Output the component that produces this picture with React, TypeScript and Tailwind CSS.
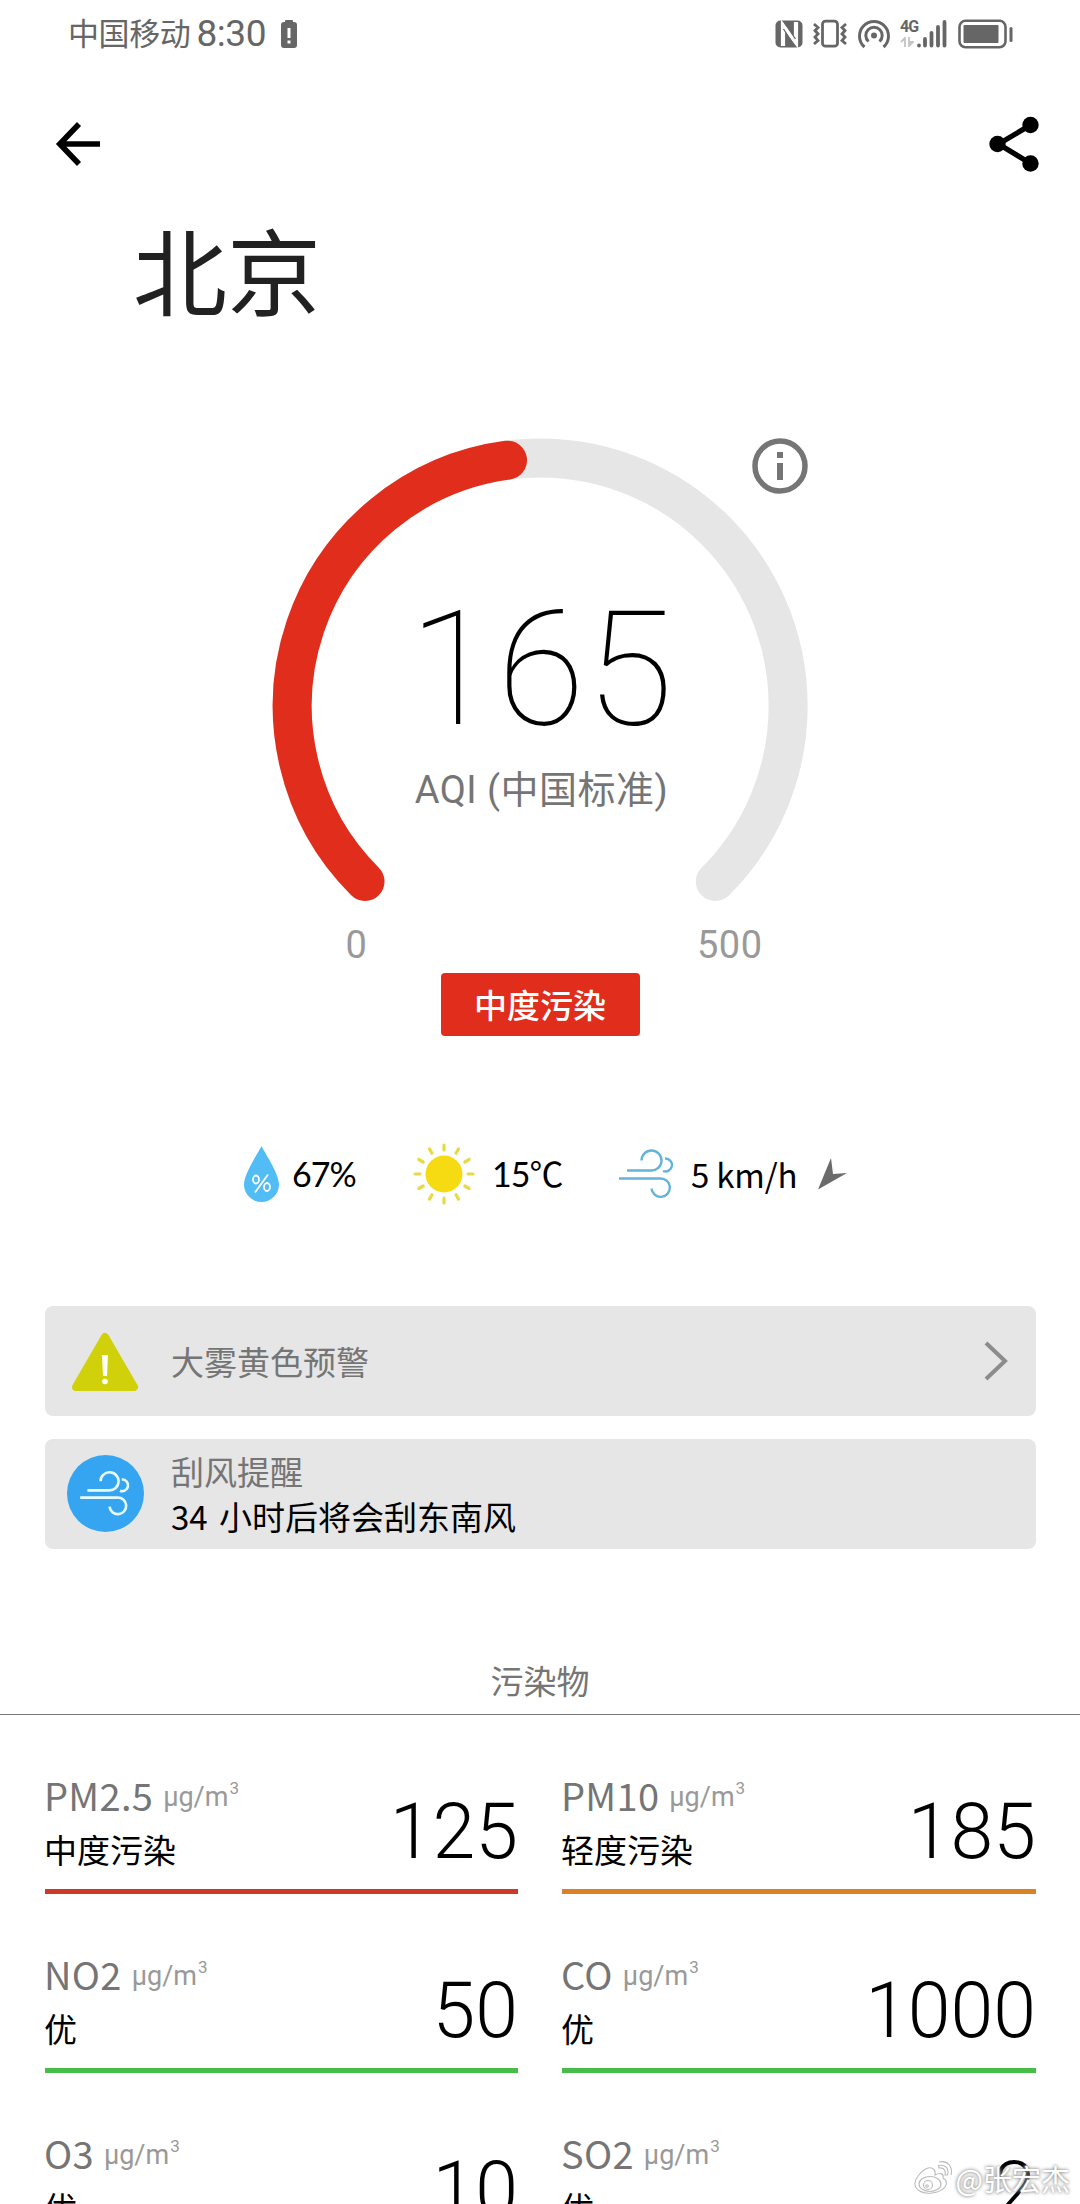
import React from 'react';

const sans = "font-['Roboto','Noto_Sans_CJK_SC',sans-serif]";
const cjk = "font-['Noto_Sans_CJK_SC',sans-serif]";

function StatusBar() {
  return (
    <header className="flex h-[67px] items-center justify-between pl-[68px] pr-[66px] text-[#666]">
      <div className="flex items-center">
        <span className={`${cjk} mb-[3px] text-[31px] leading-[40px] tracking-[-0.4px]`}>中国移动</span>
        <span className="ml-[6px] font-['Roboto',sans-serif] text-[37px] leading-[40px] tracking-[-0.4px]">8:30</span>
        <svg className="ml-[14px]" width="18" height="30" viewBox="0 0 18 30" fill="#666">
          <rect x="5" y="1" width="8" height="4" rx="1" />
          <rect x="1" y="3" width="16" height="26" rx="3" />
          <rect x="7.5" y="9" width="3" height="10" fill="#fff" />
          <rect x="7.5" y="21.500" width="3" height="3" fill="#fff" />
        </svg>
      </div>
      <div className="flex items-center">
        <svg width="28" height="28" viewBox="0 0 28 28">
          <rect x="0.500" y="0.500" width="27" height="27" rx="5" fill="#666" />
          <path d="M8 26V5.500L21 22.500V2" fill="none" stroke="#fff" strokeWidth="4.200" />
          <path d="M10 3.500L20.500 19M8.500 9L19 25" fill="none" stroke="#666" strokeWidth="1.300" />
        </svg>
        <svg className="ml-[9px]" width="36" height="30" viewBox="0 0 36 30" fill="none" stroke="#666" strokeWidth="2.800">
          <rect x="10.500" y="2.200" width="15" height="25" rx="3" />
          <path d="M2 5l4 3.500-3 3 3 3.500-3 3 3 3.500-4 3.500M34 5l-4 3.500 3 3-3 3.500 3 3-3 3.500 4 3.500" />
        </svg>
        <svg className="ml-[9px]" width="34" height="30" viewBox="0 0 34 30" fill="none" stroke="#666" strokeWidth="3">
          <path d="M7.500 28A14.500 14.500 0 1 1 26.500 28" />
          <path d="M11.500 22.500A8.200 8.200 0 1 1 22.500 22.500" />
          <circle cx="17" cy="16.500" r="3" fill="#666" stroke="none" />
        </svg>
        <div className="ml-[9px] flex h-[30px] w-[16px] flex-col">
          <span className="font-['Roboto',sans-serif] text-[16px] font-bold leading-[15px] tracking-[-1px]">4G</span>
          <svg className="mt-[3px]" width="14" height="10" viewBox="0 0 14 10" fill="none" stroke="#c4c4c4" strokeWidth="1.800">
            <path d="M1 5l4-4v9M13 5H9V0v9z" />
          </svg>
        </div>
        <svg width="31" height="30" viewBox="0 0 31 30" stroke="#666" strokeWidth="3.800" strokeLinecap="round">
          <path d="M3 26.500v.100M9 20v6.600M15.500 14v12.600M22 8v18.600M28.500 3v23.600" />
        </svg>
        <svg className="ml-[11px]" width="56" height="30" viewBox="0 0 56 30">
          <rect x="1.500" y="1.800" width="46" height="26.500" rx="6" fill="none" stroke="#666" strokeWidth="2.600" />
          <rect x="5.500" y="6" width="35" height="18" rx="1" fill="#666" />
          <rect x="51.500" y="8" width="3" height="15" rx="1.500" fill="#666" />
        </svg>
      </div>
    </header>
  );
}

function NavBar() {
  return (
    <nav className="flex h-[153px] items-center justify-between pl-[55px] pr-[39px]">
      <svg width="46" height="46" viewBox="0 0 46 46" fill="none" stroke="#000" strokeWidth="5.600">
        <path d="M4.500 23H45M24 3L4.800 23l19.200 20" />
      </svg>
      <svg width="52" height="58" viewBox="0 0 52 58">
        <path d="M41.500 10L9.500 29l32 19.500" fill="none" stroke="#000" strokeWidth="5.200" />
        <circle cx="41.500" cy="10" r="8.200" />
        <circle cx="8.500" cy="29" r="8.200" />
        <circle cx="41.500" cy="48.500" r="8.200" />
      </svg>
    </nav>
  );
}

function Gauge() {
  return (
    <section className="flex flex-col items-center">
      <div className="grid h-[490px] w-[536px] grid-cols-1 grid-rows-1">
        <svg className="col-start-1 row-start-1" width="536" height="490" viewBox="272.500 438 536 490" fill="none" strokeLinecap="round">
          <path d="M365.500 881.500A248 248 0 1 1 715.800 881.500" stroke="#e6e6e6" strokeWidth="39" />
          <path d="M365.500 881.500A248 248 0 0 1 508 460.200" stroke="#e12d1c" strokeWidth="39" />
          <circle cx="780.500" cy="466" r="25" stroke="#757575" strokeWidth="5.500" />
          <path d="M780.500 463v17" stroke="#757575" strokeWidth="6" strokeLinecap="butt" />
          <path d="M780.500 452v6" stroke="#757575" strokeWidth="6" strokeLinecap="butt" />
        </svg>
        <div className="col-start-1 row-start-1 flex flex-col items-center pt-[152px]">
          <div className="pl-[3px] font-['Roboto',sans-serif] text-[160px] font-thin leading-[160px] tracking-[1px] text-black">165</div>
          <div className={`${sans} mt-[15px] pl-[3px] text-[38px] leading-[50px] tracking-[0.500px] text-[#757575]`}>AQI (中国标准)</div>
        </div>
      </div>
      <div className="mt-[-6px] flex w-[445px] justify-between font-['Roboto',sans-serif] text-[38px] leading-[46px] tracking-[0.500px] text-[#999]">
        <span className="pl-[28px]">0</span>
        <span>500</span>
      </div>
      <div className={`${cjk} mt-[5px] flex h-[63px] w-[199px] items-center justify-center rounded-[4px] bg-[#e12d1c] text-[33px] font-medium text-white`}>中度污染</div>
    </section>
  );
}

function WindPaths() {
  return (
    <>
      <path d="M8 21.500H32A10 10 0 1 0 22.500 11.500" />
      <path d="M46 9.500A6.500 6.500 0 1 1 44 22" />
      <path d="M0 29.500H41A9.200 9.200 0 1 1 32.500 39.500" />
    </>
  );
}

const rays = Array.from({ length: 12 }, (_, i) => i * 30);

function Weather() {
  return (
    <section className="mt-[103px] flex h-[70px] items-center pl-[243px] text-[34px] leading-[44px] text-black">
      <svg width="37" height="58" viewBox="0 0 37 58">
        <path d="M18.500 1C20 5 36 28 36 39.500A17.500 17.500 0 0 1 1 39.500C1 28 17 5 18.500 1z" fill="#52bcf5" />
        <g fill="none" stroke="#fff" strokeWidth="1.800">
          <ellipse cx="13" cy="34.500" rx="3" ry="4" />
          <ellipse cx="24" cy="42" rx="3" ry="4" />
          <path d="M25 29.500L12 47.500" />
        </g>
      </svg>
      <span className="ml-[12px] w-[66px] whitespace-nowrap font-['Lato',sans-serif] tracking-[-1px]">67%</span>
      <svg className="ml-[55px]" width="62" height="62" viewBox="-31 -31 62 62">
        <circle r="18.500" fill="#f6da12" />
        {rays.map((angle) => (
          <path key={angle} d="M0 -24V-29" transform={`rotate(${angle})`} stroke="#e9da45" strokeWidth="3.200" strokeLinecap="round" />
        ))}
      </svg>
      <span className="ml-[17px] w-[72px] whitespace-nowrap font-['Lato','Noto_Sans_CJK_SC',sans-serif] tracking-[-1px]">15℃</span>
      <svg className="ml-[54px]" width="58" height="52" viewBox="-1 -1 58 52" fill="none" stroke="#64b3d9" strokeWidth="2.400">
        <WindPaths />
      </svg>
      <span className={`${cjk} ml-[15px] w-[108px] whitespace-nowrap text-[33px] tracking-[-0.200px]`}>5 km/h</span>
      <svg className="ml-[19px]" width="29" height="32" viewBox="0 0 29 32" fill="#6b6b6b">
        <path d="M13 0l2 16 14-1L0 31.500z" />
      </svg>
    </section>
  );
}

function Alerts() {
  return (
    <section className={`${cjk} mt-[97px] flex flex-col gap-[23px] pl-[45px] pr-[44px]`}>
      <div className="flex h-[110px] items-center rounded-[8px] bg-[#e6e6e6] pl-[26px] pr-[27px]">
        <svg className="mt-[2px]" width="68" height="60" viewBox="0 0 68 60">
          <path d="M34 5L63 55H5z" fill="#d0d10a" stroke="#d0d10a" strokeWidth="8" strokeLinejoin="round" />
          <path d="M31 23h6l-1 21h-4z" fill="#fff" />
          <circle cx="34" cy="49.500" r="2.800" fill="#fff" />
        </svg>
        <span className="ml-[32px] grow text-[33px] leading-[44px] text-[#757575]">大雾黄色预警</span>
        <svg width="26" height="42" viewBox="0 0 26 42" fill="none" stroke="#8c8c8c" strokeWidth="4">
          <path d="M3 3l19 18L3 39" />
        </svg>
      </div>
      <div className="flex h-[110px] items-center rounded-[8px] bg-[#e6e6e6] pl-[22px]">
        <div className="mb-[1px] flex size-[77px] items-center justify-center rounded-full bg-[#35a5f2]">
          <svg width="53" height="47" viewBox="-1 -1 58 52" fill="none" stroke="#e8fbff" strokeWidth="2.900">
            <WindPaths />
          </svg>
        </div>
        <div className="ml-[27px] text-[33px] leading-[45px]">
          <div className="text-[#757575]">刮风提醒</div>
          <div className="text-black [word-spacing:4px]">34 小时后将会刮东南风</div>
        </div>
      </div>
    </section>
  );
}

const pollutants = [
  { name: 'PM2.5', level: '中度污染', value: 125, bar: 'bg-[#cb3a26]' },
  { name: 'PM10', level: '轻度污染', value: 185, bar: 'bg-[#d98226]' },
  { name: 'NO2', level: '优', value: 50, bar: 'bg-[#45bd47]' },
  { name: 'CO', level: '优', value: 1000, bar: 'bg-[#45bd47]' },
  { name: 'O3', level: '优', value: 10, bar: 'bg-[#45bd47]' },
  { name: 'SO2', level: '优', value: 2, bar: 'bg-[#45bd47]' },
];

function Pollutants() {
  return (
    <section>
      <h2 className={`${cjk} mt-[109px] flex h-[57px] items-start justify-center border-b border-[#777] text-[33px] leading-[44px] text-[#757575]`}>污染物</h2>
      <div className="mt-[52px] grid grid-cols-[473px_474px] gap-x-[44px] px-[45px]">
        {pollutants.map((p) => (
          <div key={p.name} className="h-[179px]">
            <div className="flex h-[122px] justify-between">
              <div className="ml-[-1px]">
                <div className="flex h-[51px] items-start pt-[5px] leading-[46px]">
                  <span className={`${cjk} text-[38px] tracking-[0.300px] text-[#757575]`}>{p.name}</span>
                  <span className="ml-[10px] font-['Roboto',sans-serif] text-[27px] leading-[50px] text-[#999]">μg/m<sup className="top-[-12px] ml-[1px] text-[17px] leading-none">3</sup></span>
                </div>
                <div className={`${cjk} mt-[9px] text-[33px] leading-[44px] text-black`}>{p.level}</div>
              </div>
              <div className="pt-[20px] font-['Roboto',sans-serif] text-[77px] font-light leading-[90px] text-black">{p.value}</div>
            </div>
            <div className={`h-[5px] ${p.bar}`} />
          </div>
        ))}
      </div>
    </section>
  );
}

function Watermark() {
  return (
    <div className="absolute bottom-[6px] right-[10px] flex items-center">
      <svg width="40" height="36" viewBox="0 0 40 36" fill="#fff" stroke="#bbb" strokeWidth="1.100">
        <path d="M15 8C9 10 1 19 2 25c1 6 9 9 17 8 9-1 16-6 14-12-.500-2-3-2-3-3 1-4-2-6-8-3 1-5-2-8-7-7z" />
        <ellipse cx="17" cy="24" rx="11" ry="7.500" />
        <circle cx="15" cy="25" r="4.500" />
        <circle cx="14" cy="26" r="1.300" />
        <path d="M26 8c5-1 7 3 6 7l2.500 0c2-6-2-11-9-9.500zM26 2c9-2 14 5 12 13" fill="none" />
      </svg>
      <span className={`${cjk} ml-[3px] text-[29px] leading-[40px] text-white [text-shadow:0_0_3px_#888,0_0_4px_#aaa]`}>@张宏杰</span>
    </div>
  );
}

export default function App() {
  return (
    <main className="relative h-[2204px] w-[1080px] overflow-hidden bg-white">
      <StatusBar />
      <NavBar />
      <h1 className={`${cjk} mt-[-5px] flex h-[223px] items-start pl-[133px] text-[94px] leading-[106px] text-[#212121]`}>北京</h1>
      <Gauge />
      <Weather />
      <Alerts />
      <Pollutants />
      <Watermark />
    </main>
  );
}
